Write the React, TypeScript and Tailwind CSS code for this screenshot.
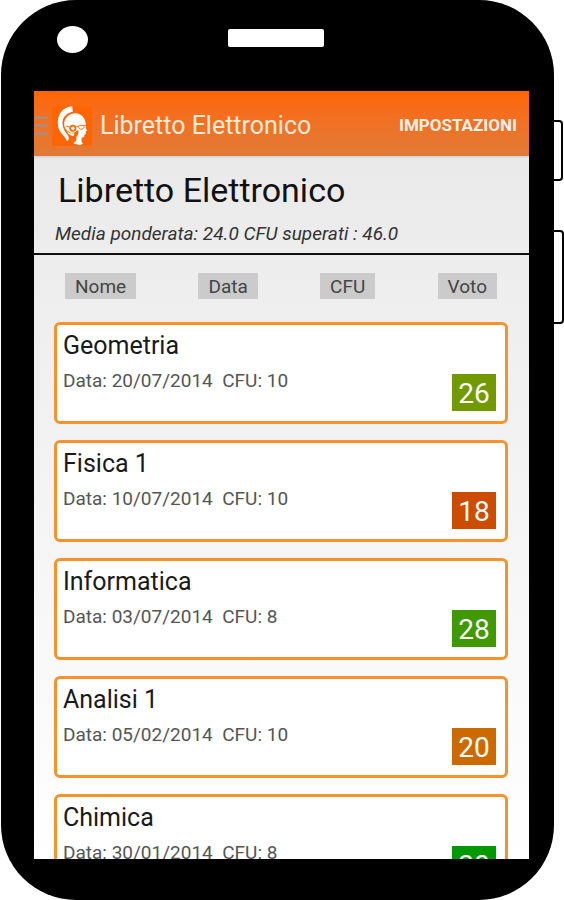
type Exam = {
  name: string;
  date: string;
  cfu: number;
  grade: number;
  color: string;
};

const exams: Exam[] = [
  { name: "Geometria", date: "20/07/2014", cfu: 10, grade: 26, color: "bg-[#739900]" },
  { name: "Fisica 1", date: "10/07/2014", cfu: 10, grade: 18, color: "bg-[#cc4c00]" },
  { name: "Informatica", date: "03/07/2014", cfu: 8, grade: 28, color: "bg-[#409900]" },
  { name: "Analisi 1", date: "05/02/2014", cfu: 10, grade: 20, color: "bg-[#cc6a00]" },
  { name: "Chimica", date: "30/01/2014", cfu: 8, grade: 30, color: "bg-[#009900]" },
];

const sortKeys = ["Nome", "Data", "CFU", "Voto"];

const Logo = () => (
  <svg viewBox="0 0 92 120" className="h-10 w-[31px]" fill="#fff" aria-hidden="true">
    {/* Crest */}
    <path d="M45 1 L47 17 C30 20 18 31 16 48 C15 64 23 76 31 86 C37 94 36 104 29 106 C28 94 11 86 4 66 C-3 40 6 10 36 2 Z" />
    {/* Helmet */}
    <path d="M21 52 C22 36 36 22 55 22 C73 23 84 36 86 54 L84 66 L40 80 C30 76 20 66 21 52 Z" />
    {/* Neck guard */}
    <path d="M28 72 C34 82 42 84 52 82 L50 89 C42 90 33 86 28 72 Z" />
    {/* Face */}
    <path d="M62 66 L86 58 L85 66 L90 73 L86 76 L86 83 L82 86 L81 93 L73 95 L73 105 L77 113 L68 118 L48 112 C57 106 60 99 57 93 C64 86 66 78 62 66 Z" />
    {/* Glasses */}
    <circle cx="47" cy="67" r="13" fill="#fff" />
    <circle cx="47" cy="67" r="8" fill="none" stroke="#ff6600" strokeWidth="5" />
    <path d="M27 60 L37 63 M57 63 L67 59 L86 59 M64 62 C66 72 78 73 81 62" fill="none" stroke="#ff6600" strokeWidth="3" />
  </svg>
);

const Header = () => (
  <header className="flex h-[65px] shrink-0 items-center bg-linear-to-b from-[#ff6600] to-[#e07a36] pt-1 pr-3 text-white shadow-sm">
    <button type="button" aria-label="Menu" className="flex w-[14px] flex-col gap-[5px]">
      <span className="h-[3px] bg-[#b08a72]" />
      <span className="h-[3px] bg-[#b08a72]" />
      <span className="h-[3px] bg-[#b08a72]" />
    </button>
    <span className="ml-1 flex h-10 w-10 items-center justify-center bg-[#ff6600]">
      <Logo />
    </span>
    <span className="ml-2 text-[25px] whitespace-nowrap text-[#ffeadc]">Libretto Elettronico</span>
    <button type="button" className="ml-auto text-[17px] font-bold text-[#fff0e6]">
      IMPOSTAZIONI
    </button>
  </header>
);

const ExamCard = ({ exam }: { exam: Exam }) => (
  <li className="flex h-[102px] shrink-0 justify-between rounded-md border-[3px] border-[#f7922d] bg-white pr-[9px] pl-1.5">
    <div>
      <h2 className="mt-1.5 text-[25px] leading-[30px] text-[#1a1a1a]">{exam.name}</h2>
      <p className="mt-2 text-[19px] leading-6 whitespace-pre text-[#555]">
        {`Data: ${exam.date}  CFU: ${exam.cfu}`}
      </p>
    </div>
    <span
      className={`mb-[10px] flex h-[37px] w-11 items-center justify-center self-end pt-0.5 text-[28px] leading-none text-white ${exam.color}`}
    >
      {exam.grade}
    </span>
  </li>
);

export default function App() {
  return (
    <div className="flex h-screen bg-white pl-px font-[Roboto,sans-serif]">
      {/* Phone body */}
      <div className="flex min-w-0 flex-1 flex-col rounded-[75px] bg-black pr-[25px] pb-[41px] pl-[33px]">
        <div className="flex h-[91px] shrink-0 items-start pt-[26px] pl-[23px]">
          <span className="h-[27px] w-[31px] rounded-[50%] bg-white" />
          <span className="mt-[3px] ml-[140px] h-[18px] w-24 rounded-xs bg-white" />
        </div>

        <main className="flex min-h-0 flex-1 flex-col overflow-hidden bg-linear-to-b from-[#e8e8e8] to-white">
          <Header />

          <section className="h-[99px] shrink-0 border-b-2 border-[#111] pt-3">
            <h1 className="pl-6 text-[34px] leading-[44px] text-[#111]">Libretto Elettronico</h1>
            <p className="mt-2 pl-[21px] text-[19px] leading-7 text-[#333] italic">
              Media ponderata: 24.0 CFU superati : 46.0
            </p>
          </section>

          {/* Sort buttons */}
          <div className="flex shrink-0 justify-between pt-[18px] pr-8 pb-[23px] pl-[31px]">
            {sortKeys.map((key) => (
              <button key={key} type="button" className="h-[26px] bg-[#cbcbcb] px-[10px] text-[19px] leading-7 text-[#444]">
                {key}
              </button>
            ))}
          </div>

          <ul className="flex min-h-0 flex-1 flex-col gap-4 overflow-y-auto pr-[21px] pl-5 [scrollbar-width:none]">
            {exams.map((exam) => (
              <ExamCard key={exam.name} exam={exam} />
            ))}
          </ul>
        </main>
      </div>

      {/* Side keys */}
      <div className="flex w-[10px] shrink-0 flex-col pt-[120px]">
        <span className="mr-px h-[61px] rounded-r-sm border-2 border-l-0 border-black" />
        <span className="mt-[49px] h-[94px] rounded-r-sm border-2 border-l-0 border-black" />
      </div>
    </div>
  );
}
